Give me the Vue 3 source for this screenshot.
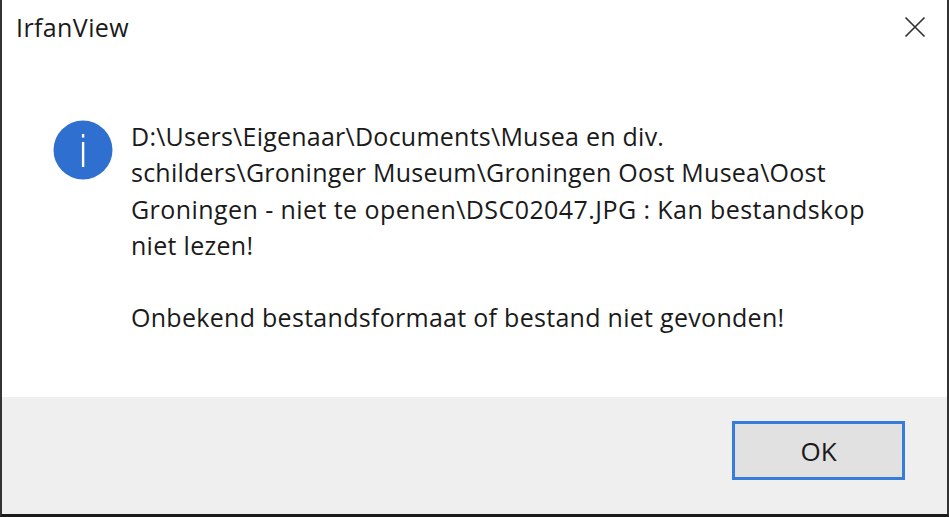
<template>
  <div class="dialog">
    <header class="title-bar">
      <span class="title">IrfanView</span>
      <svg class="close" width="22" height="22" viewBox="0 0 22 22" aria-label="Sluiten">
        <path d="M1.5 1.5 L20.5 20.5 M20.5 1.5 L1.5 20.5" stroke="#333" stroke-width="1.7" fill="none" />
      </svg>
    </header>
    <main class="body">
      <svg class="info" width="60" height="60" viewBox="0 0 60 60">
        <circle cx="30" cy="30" r="29.5" fill="#2f6fd0" />
        <rect x="28.9" y="14" width="2.4" height="3.6" fill="#fff" />
        <rect x="28.9" y="22" width="2.4" height="25" fill="#fff" />
      </svg>
      <div class="message">
        <p>
          <span class="line tight">D:\Users\Eigenaar\Documents\Musea en div.</span>
          <span class="line tight">schilders\Groninger Museum\Groningen Oost Musea\Oost</span>
          <span class="line wide">Groningen - niet te openen\DSC02047.JPG : Kan bestandskop</span>
          <span class="line">niet lezen!</span>
        </p>
        <p><span class="line">Onbekend bestandsformaat of bestand niet gevonden!</span></p>
      </div>
    </main>
    <footer class="footer">
      <button class="ok">OK</button>
    </footer>
  </div>
</template>

<script setup>
</script>

<style scoped>
.dialog {
  width: 949px;
  height: 517px;
  box-sizing: border-box;
  display: flex;
  flex-direction: column;
  background: #fff;
  border-left: 2px solid #333;
  border-right: 2px solid #333;
  border-bottom: 3px solid #1a1a1a;
  font-family: "Open Sans", "Noto Sans", sans-serif;
  color: #1a1a1a;
}
.title-bar {
  height: 54px;
  display: flex;
  align-items: center;
  justify-content: space-between;
  padding: 0 21px 0 15px;
}
.title {
  font-size: 25px;
  letter-spacing: 0.4px;
  margin-left: -1px;
}
.close {
  display: block;
}
.body {
  flex: 1;
  display: flex;
  align-items: flex-start;
  gap: 18px;
  padding: 66px 0 0 51px;
}
.message {
  font-size: 25px;
  line-height: 36.3px;
  letter-spacing: 0.29px;
  margin-top: -2px;
}
.line {
  display: block;
}
.tight {
  letter-spacing: 0.24px;
}
.wide {
  letter-spacing: 0.43px;
}
.info {
  flex: none;
}
.message p {
  margin: 0 0 36px;
  white-space: nowrap;
}
.footer {
  height: 117px;
  background: #efefef;
  display: flex;
  justify-content: flex-end;
  align-items: flex-start;
  padding: 24px 42px 0 0;
  box-sizing: border-box;
}
.ok {
  width: 173px;
  height: 59px;
  box-sizing: border-box;
  background: #e1e1e1;
  border: 3px solid #357cdb;
  border-radius: 0;
  font: inherit;
  font-size: 26px;
  color: #1a1a1a;
  padding: 0;
}
</style>
